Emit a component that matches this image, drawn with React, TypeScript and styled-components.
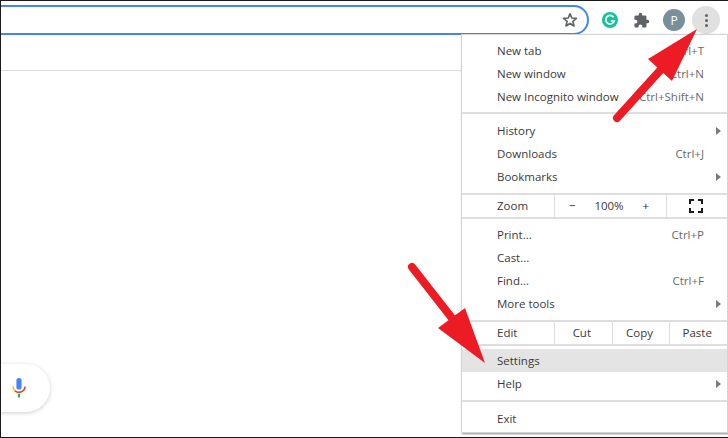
import React from "react";
import styled, { createGlobalStyle } from "styled-components";

const GlobalStyle = createGlobalStyle`
  html, body {
    margin: 0;
    padding: 0;
    background: #ffffff;
  }
  #root {
    width: 728px;
    height: 438px;
  }
`;

type MenuItem = {
  label: string;
  shortcut?: string;
  submenu?: boolean;
  active?: boolean;
};

const newItems: MenuItem[] = [
  { label: "New tab", shortcut: "Ctrl+T" },
  { label: "New window", shortcut: "Ctrl+N" },
  { label: "New Incognito window", shortcut: "Ctrl+Shift+N" },
];

const historyItems: MenuItem[] = [
  { label: "History", submenu: true },
  { label: "Downloads", shortcut: "Ctrl+J" },
  { label: "Bookmarks", submenu: true },
];

const toolItems: MenuItem[] = [
  { label: "Print...", shortcut: "Ctrl+P" },
  { label: "Cast..." },
  { label: "Find...", shortcut: "Ctrl+F" },
  { label: "More tools", submenu: true },
];

const helpItems: MenuItem[] = [
  { label: "Settings", active: true },
  { label: "Help", submenu: true },
];

function Rows({ items }: { items: MenuItem[] }) {
  return (
    <>
      {items.map(({ label, shortcut, submenu, active }) => (
        <Row key={label} $active={active}>
          <span>{label}</span>
          {shortcut && <Shortcut>{shortcut}</Shortcut>}
          {submenu && <SubArrow />}
        </Row>
      ))}
    </>
  );
}

export default function App() {
  return (
    <>
      <GlobalStyle />
      <Frame>
        <Toolbar>
          <Omnibox>
            <svg width="16" height="16" viewBox="0 0 16 16">
              <polygon
                points="8,1.8 9.8,6 14.4,6.4 10.9,9.4 12,13.9 8,11.5 4,13.9 5.1,9.4 1.6,6.4 6.2,6"
                fill="none"
                stroke="#5f6368"
                strokeWidth="1.7"
                strokeLinejoin="round"
              />
            </svg>
          </Omnibox>
          <Extensions>
            <GrammarlyIcon>
              <svg width="12" height="12" viewBox="0 0 12 12">
                <path
                  d="M9.6 3.2A4.3 4.3 0 1 0 10.2 7H6.8"
                  fill="none"
                  stroke="#ffffff"
                  strokeWidth="1.7"
                />
              </svg>
            </GrammarlyIcon>
            <PuzzleIcon viewBox="0 0 24 24">
              <path d="M20.5 11H19V7a2 2 0 0 0-2-2h-4V3.5a2.5 2.5 0 0 0-5 0V5H4a2 2 0 0 0-2 2v3.8h1.5a2.7 2.7 0 0 1 0 5.4H2V20a2 2 0 0 0 2 2h3.8v-1.5a2.7 2.7 0 0 1 5.4 0V22H17a2 2 0 0 0 2-2v-4h1.5a2.5 2.5 0 0 0 0-5z" />
            </PuzzleIcon>
            <Avatar>P</Avatar>
            <MenuButton>
              <Dot />
              <Dot />
              <Dot />
            </MenuButton>
          </Extensions>
        </Toolbar>
        <BookmarkBar />
        <Content>
          <VoicePill>
            <svg width="14" height="20" viewBox="0 0 14 20">
              <rect x="4.4" y="0" width="5.2" height="11.5" rx="2.6" fill="#4285f4" />
              <path d="M1 8.5a6 6 0 0 0 2.4 4.6" fill="none" stroke="#fbbc05" strokeWidth="1.6" />
              <path d="M3 12.8a6 6 0 0 0 10-4.3" fill="none" stroke="#ea4335" strokeWidth="1.6" />
              <rect x="6" y="16" width="2" height="3.5" fill="#34a853" />
            </svg>
          </VoicePill>
        </Content>

        <Menu>
          <Rows items={newItems} />
          <Separator $before={4} $after={5} />
          <Rows items={historyItems} />
          <Separator $before={5} $after={0} />
          <ControlRow>
            <ControlLabel>Zoom</ControlLabel>
            <ZoomControls>
              <ZoomSign>−</ZoomSign>
              <span>100%</span>
              <ZoomSign>+</ZoomSign>
            </ZoomControls>
            <FullscreenCell>
              <svg width="14" height="14" viewBox="0 0 14 14">
                <path
                  d="M1 5V1h4M9 1h4v4M13 9v4H9M5 13H1V9"
                  fill="none"
                  stroke="#1a1a1a"
                  strokeWidth="2"
                />
              </svg>
            </FullscreenCell>
          </ControlRow>
          <Separator $before={0} $after={4} />
          <Rows items={toolItems} />
          <Separator $before={5} $after={0} />
          <ControlRow>
            <ControlLabel>Edit</ControlLabel>
            <EditCell>Cut</EditCell>
            <EditCell>Copy</EditCell>
            <EditCell>Paste</EditCell>
          </ControlRow>
          <Separator $before={0} $after={3} />
          <Rows items={helpItems} />
          <Separator $before={5} $after={5} />
          <Rows items={[{ label: "Exit" }]} />
        </Menu>

        <ArrowOverlay viewBox="0 0 728 438">
          <line x1="617" y1="118" x2="665" y2="65" stroke="#ed1c24" strokeWidth="8" strokeLinecap="round" />
          <polygon points="697,29 648,59 672,81" fill="#ed1c24" />
          <line x1="412" y1="267" x2="455" y2="322" stroke="#ed1c24" strokeWidth="8" strokeLinecap="round" />
          <polygon points="485,363 465,308 438,328" fill="#ed1c24" />
        </ArrowOverlay>
      </Frame>
    </>
  );
}

const Frame = styled.div`
  position: relative;
  width: 728px;
  height: 438px;
  box-sizing: border-box;
  overflow: hidden;
  border-left: 1px solid #1a1a1a;
  border-top: 1px solid #1a1a1a;
  border-bottom: 1px solid #1a1a1a;
  display: flex;
  flex-direction: column;
  background: #ffffff;
  font-family: "Open Sans", "Liberation Sans", sans-serif;
`;

const Toolbar = styled.div`
  height: 34px;
  box-sizing: border-box;
  display: flex;
  align-items: flex-start;
  padding-top: 4px;
  border-bottom: 1px solid #dadce0;
`;

const Omnibox = styled.div`
  flex: none;
  width: 589px;
  height: 30px;
  margin-left: -1px;
  box-sizing: border-box;
  border: 2px solid #4285f4;
  border-left: none;
  border-radius: 0 15px 15px 0;
  background: #ffffff;
  display: flex;
  align-items: center;
  justify-content: flex-end;
  padding-right: 9px;
`;

const Extensions = styled.div`
  flex: 1;
  display: flex;
  align-items: center;
  padding-left: 13px;
  height: 30px;
`;

const GrammarlyIcon = styled.div`
  width: 16px;
  height: 16px;
  border-radius: 50%;
  background: #15c39a;
  display: flex;
  align-items: center;
  justify-content: center;
`;

const PuzzleIcon = styled.svg`
  width: 17px;
  height: 17px;
  margin-left: 15px;
  fill: #5f6368;
`;

const Avatar = styled.div`
  width: 22px;
  height: 22px;
  margin-left: 13px;
  border-radius: 50%;
  background: #78909c;
  color: #ffffff;
  font-size: 12px;
  display: flex;
  align-items: center;
  justify-content: center;
`;

const MenuButton = styled.div`
  width: 28px;
  height: 28px;
  margin-left: 7px;
  border-radius: 50%;
  background: #e0e0e0;
  display: flex;
  flex-direction: column;
  align-items: center;
  justify-content: center;
  gap: 2px;
`;

const Dot = styled.span`
  width: 3px;
  height: 3px;
  border-radius: 50%;
  background: #5f6368;
`;

const BookmarkBar = styled.div`
  height: 36px;
  box-sizing: border-box;
  border-bottom: 1px solid #dadce0;
`;

const Content = styled.div`
  flex: 1;
  display: flex;
  align-items: flex-end;
  padding-bottom: 25px;
`;

const VoicePill = styled.div`
  width: 50px;
  height: 48px;
  margin-left: -1px;
  box-sizing: border-box;
  border-radius: 0 24px 24px 0;
  background: #ffffff;
  box-shadow: 0 1px 4px rgba(0, 0, 0, 0.2);
  display: flex;
  align-items: center;
  justify-content: flex-end;
  padding-right: 24px;
`;

const Menu = styled.div`
  position: absolute;
  top: 33px;
  left: 460px;
  width: 267px;
  height: 399px;
  box-sizing: border-box;
  padding-top: 4px;
  background: #ffffff;
  border: 1px solid #d4d4d4;
  box-shadow: 1px 1px 2px rgba(0, 0, 0, 0.45);
  font-size: 11.5px;
  color: #3a3a3a;
`;

const Row = styled.div<{ $active?: boolean }>`
  position: relative;
  height: 23px;
  display: flex;
  align-items: center;
  justify-content: space-between;
  padding: 0 23px 0 35px;
  background: ${(p) => (p.$active ? "#e4e4e4" : "transparent")};
`;

const Shortcut = styled.span`
  color: #6a6a6a;
`;

const SubArrow = styled.span`
  position: absolute;
  right: 6px;
  top: 8px;
  width: 0;
  height: 0;
  border-left: 5px solid #7a7a7a;
  border-top: 4px solid transparent;
  border-bottom: 4px solid transparent;
`;

const Separator = styled.div<{ $before: number; $after: number }>`
  height: 2px;
  margin: ${(p) => p.$before}px 0 ${(p) => p.$after}px;
  background: #dedede;
`;

const ControlRow = styled.div`
  height: 22px;
  display: flex;
  align-items: stretch;
`;

const ControlLabel = styled.div`
  flex: none;
  width: 57px;
  padding-left: 35px;
  padding-bottom: 2px;
  display: flex;
  align-items: center;
`;

const ZoomControls = styled.div`
  width: 113px;
  border-left: 1px solid #dedede;
  border-right: 1px solid #dedede;
  display: flex;
  align-items: center;
  justify-content: space-between;
  padding: 0 17px 2px 14px;
  box-sizing: border-box;
`;

const ZoomSign = styled.span`
  color: #222222;
`;

const FullscreenCell = styled.div`
  flex: 1;
  display: flex;
  align-items: center;
  justify-content: center;
  padding-right: 2px;
`;

const EditCell = styled.div`
  width: 58px;
  border-left: 1px solid #dedede;
  display: flex;
  align-items: center;
  justify-content: center;
  box-sizing: border-box;
  padding: 0 3px 2px 0;
`;

const ArrowOverlay = styled.svg`
  position: absolute;
  top: -1px;
  left: -1px;
  width: 728px;
  height: 438px;
  pointer-events: none;
`;
